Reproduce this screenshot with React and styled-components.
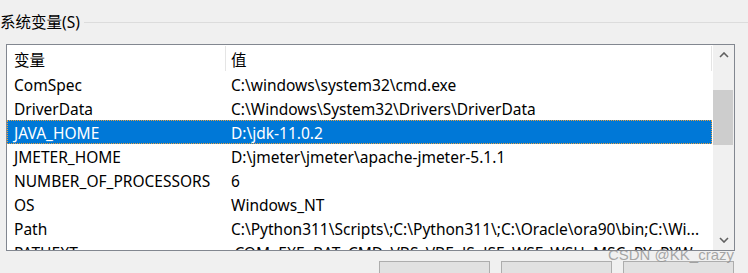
import React from "react";
import styled, { createGlobalStyle } from "styled-components";

const GlobalStyle = createGlobalStyle`
  html, body {
    margin: 0;
    padding: 0;
    background: #f0f0f0;
  }
  body {
    font-family: "Noto Sans", "Noto Sans CJK SC", sans-serif;
    font-size: 15.5px;
    color: #000;
  }
`;

const rows = [
  ["ComSpec", "C:\\windows\\system32\\cmd.exe"],
  ["DriverData", "C:\\Windows\\System32\\Drivers\\DriverData"],
  ["JAVA_HOME", "D:\\jdk-11.0.2"],
  ["JMETER_HOME", "D:\\jmeter\\jmeter\\apache-jmeter-5.1.1"],
  ["NUMBER_OF_PROCESSORS", "6"],
  ["OS", "Windows_NT"],
  ["Path", "C:\\Python311\\Scripts\\;C:\\Python311\\;C:\\Oracle\\ora90\\bin;C:\\Wi..."],
  ["PATHEXT", ".COM;.EXE;.BAT;.CMD;.VBS;.VBE;.JS;.JSE;.WSF;.WSH;.MSC;.PY;.PYW"],
];

const Page = styled.div`
  position: relative;
  width: 748px;
  height: 273px;
  overflow: hidden;
  display: flex;
  flex-direction: column;
  background: #f0f0f0;
`;

const TopRule = styled.div`
  height: 1px;
  margin-top: 1px;
  background: #dcdcdc;
`;

const GroupHeader = styled.div`
  display: flex;
  align-items: center;
  gap: 4px;
  height: 20px;
  margin-top: 11px;
`;

const GroupTitle = styled.span`
  line-height: 20px;
  white-space: nowrap;
`;

const GroupLine = styled.div`
  flex: 1;
  height: 1px;
  background: #dcdcdc;
`;

const ListBox = styled.div`
  display: flex;
  width: 727px;
  height: 205px;
  margin: 12px 0 0 6px;
  border: 1px solid #828790;
  background: #fff;
`;

const ListArea = styled.div`
  width: 706px;
  display: flex;
  flex-direction: column;
  overflow: hidden;
`;

const HeaderRow = styled.div`
  display: flex;
  height: 27px;
  flex-shrink: 0;
`;

const HeaderCell = styled.div`
  width: ${(p) => p.$width}px;
  padding: 2px 0 0 ${(p) => p.$pad}px;
  box-sizing: border-box;
  display: flex;
  align-items: center;
  position: relative;
  &::after {
    content: "";
    position: absolute;
    right: 0;
    top: 1px;
    bottom: 1px;
    width: 1px;
    background: #e5e5e5;
  }
`;

const Row = styled.div`
  display: flex;
  height: 24px;
  flex-shrink: 0;
  box-sizing: border-box;
  margin-right: 1px;
  white-space: nowrap;
  background: ${(p) => (p.$selected ? "#0078d7" : "transparent")};
  color: ${(p) => (p.$selected ? "#fff" : "#000")};
  outline: ${(p) => (p.$selected ? "1px dotted #e8a040" : "none")};
  outline-offset: -1px;
`;

const Cell = styled.div`
  width: ${(p) => p.$width}px;
  padding: 2px 0 0 ${(p) => p.$pad}px;
  box-sizing: border-box;
  line-height: 23px;
  overflow: hidden;
  flex-shrink: 0;
`;

const ScrollBar = styled.div`
  width: 21px;
  display: flex;
  flex-direction: column;
  background: #f0f0f0;
`;

const ArrowButton = styled.div`
  height: 20px;
  display: flex;
  align-items: center;
  justify-content: center;
  flex-shrink: 0;
`;

const Track = styled.div`
  flex: 1;
  display: flex;
  flex-direction: column;
`;

const Thumb = styled.div`
  height: 55px;
  margin-right: 1px;
  background: #cdcdcd;
`;

const ButtonRow = styled.div`
  display: flex;
  justify-content: flex-end;
  gap: 11px;
  padding-right: 14px;
  margin-top: 10px;
`;

const DialogButton = styled.div`
  width: 111px;
  height: 23px;
  box-sizing: border-box;
  border: 1px solid #adadad;
  background: #e1e1e1;
`;

const Watermark = styled.div`
  position: absolute;
  right: 14px;
  top: 246px;
  font-family: "Liberation Sans", Arial, sans-serif;
  font-size: 15px;
  color: rgba(140, 140, 140, 0.75);
  white-space: nowrap;
`;

function Chevron({ down }) {
  return (
    <svg width="10" height="6" viewBox="0 0 10 6">
      <path
        d={down ? "M1 1 L5 5 L9 1" : "M1 5 L5 1 L9 5"}
        fill="none"
        stroke="#606060"
        strokeWidth="1.6"
      />
    </svg>
  );
}

export default function App() {
  const thumbOffset = 25;
  return (
    <Page>
      <GlobalStyle />
      <TopRule />
      <GroupHeader>
        <GroupTitle>系统变量(S)</GroupTitle>
        <GroupLine />
      </GroupHeader>
      <ListBox>
        <ListArea>
          <HeaderRow>
            <HeaderCell $width={219} $pad={7}>变量</HeaderCell>
            <HeaderCell $width={486} $pad={5}>值</HeaderCell>
          </HeaderRow>
          {rows.map(([name, value]) => (
            <Row key={name} $selected={name === "JAVA_HOME"}>
              <Cell $width={219} $pad={7}>{name}</Cell>
              <Cell $width={486} $pad={5}>{value}</Cell>
            </Row>
          ))}
        </ListArea>
        <ScrollBar>
          <ArrowButton>
            <Chevron />
          </ArrowButton>
          <Track>
            <Thumb style={{ marginTop: thumbOffset }} />
          </Track>
          <ArrowButton>
            <Chevron down />
          </ArrowButton>
        </ScrollBar>
      </ListBox>
      <ButtonRow>
        <DialogButton />
        <DialogButton />
        <DialogButton />
      </ButtonRow>
      <Watermark>CSDN @KK_crazy</Watermark>
    </Page>
  );
}
